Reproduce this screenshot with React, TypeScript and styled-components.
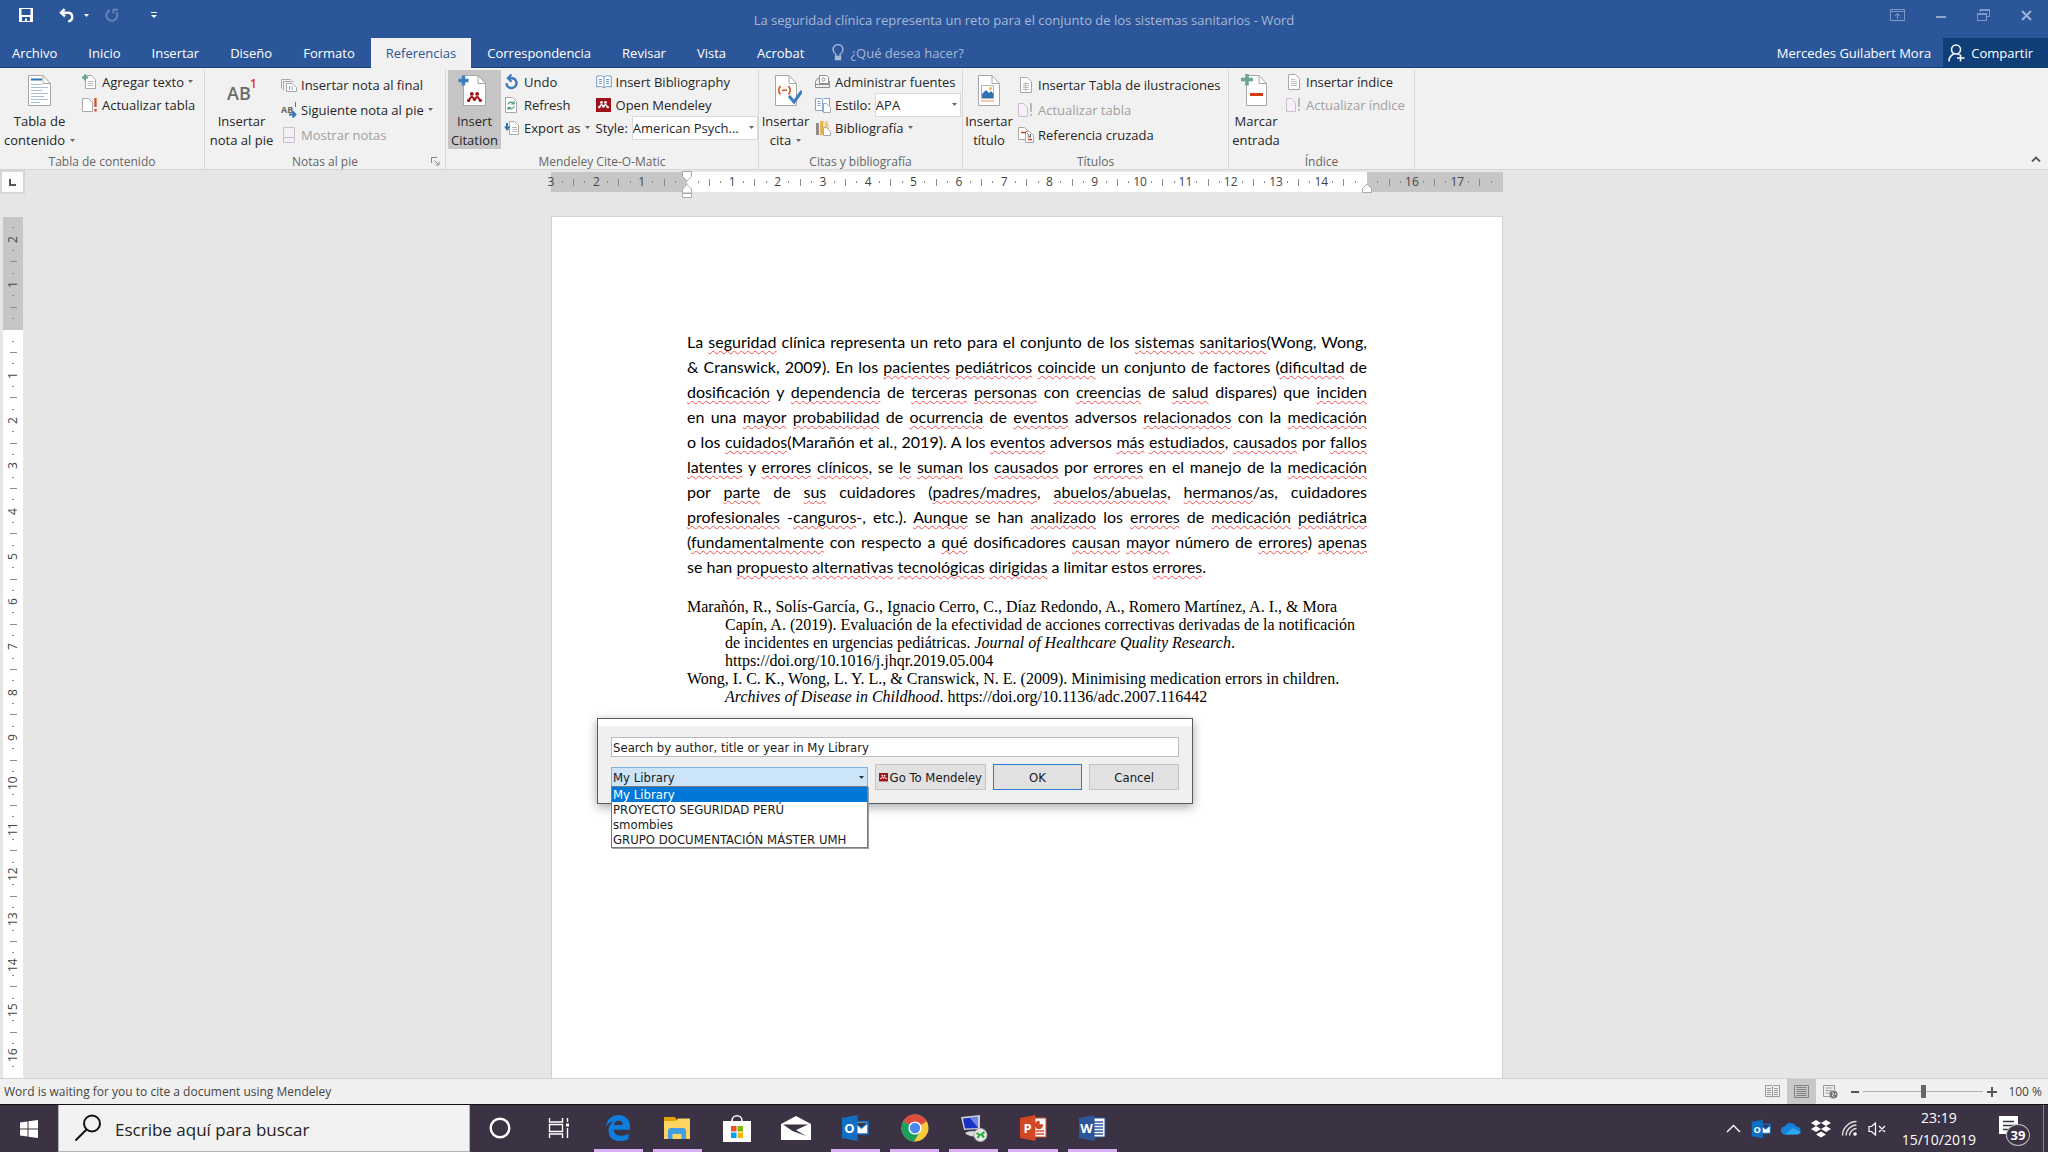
import React from "react";
import styled, { createGlobalStyle, css } from "styled-components";

const UI = `"Open Sans", "Noto Sans", sans-serif`;
const FORM = `"DejaVu Sans Condensed", "Open Sans", sans-serif`;
const BLUE = "#2b579a";

const GlobalStyle = createGlobalStyle`
  *, *::before, *::after { box-sizing: border-box; }
  body { margin: 0; font-family: ${UI}; font-size: 13px; color: #262626; }
  button, input, select { font: inherit; color: inherit; }
  button { border: 0; padding: 0; background: none; cursor: default; }
  svg { display: block; flex: none; }
  h1, h2, p, ul { margin: 0; padding: 0; font-weight: 400; }
`;

/* ---------- layout shells ---------- */

const Screen = styled.div`
  display: flex;
  flex-direction: column;
  min-height: 100vh;
  background: #e6e6e6;
`;

const TitleBar = styled.header`
  display: grid;
  grid-template-columns: 1fr auto 1fr;
  height: 38px;
  padding-bottom: 8px;
  align-items: center;
  background: ${BLUE};
`;

const QuickAccess = styled.div`
  display: flex;
  align-items: center;
  gap: 16px;
  padding-left: 19px;
`;

const IconButton = styled.button<{ $after?: number }>`
  display: flex;
  align-items: center;
  gap: 10px;
  padding-right: ${(p) => p.$after ?? 0}px;
`;

const DocTitle = styled.h1`
  padding-top: 10px;
  font-size: 13px;
  line-height: 20px;
  color: #a7b8d6;
`;

const WindowButtons = styled.div`
  display: flex;
  justify-content: flex-end;
  align-items: center;
  gap: 31px;
  padding-right: 16px;
`;

const TabBar = styled.nav`
  display: flex;
  gap: 1px;
  height: 30px;
  background: ${BLUE};
  border-bottom: 1px solid #124078;
`;

const Tab = styled.button<{ $active?: boolean }>`
  height: 30px;
  padding: 0 15px;
  line-height: 30px;
  color: ${(p) => (p.$active ? BLUE : "#fff")};
  background: ${(p) => (p.$active ? "#f1f1f1" : "transparent")};
  &:first-child { padding-left: 12px; }
`;

const TellMe = styled.button`
  display: flex;
  align-items: center;
  gap: 6px;
  margin-left: 12px;
  color: #a7b8d6;
`;

const Account = styled.span`
  margin-left: auto;
  padding-right: 11px;
  line-height: 30px;
  color: #fff;
`;

const ShareButton = styled.button`
  display: flex;
  align-items: center;
  gap: 6px;
  padding: 0 15px 0 5px;
  color: #fff;
  background: #103f78;
`;

const Ribbon = styled.section`
  display: flex;
  height: 102px;
  padding-top: 2px;
  background: #f1f1f1;
  border-bottom: 1px solid #d5d5d5;
`;

const Group = styled.div<{ $w: number }>`
  display: flex;
  flex-direction: column;
  flex: none;
  width: ${(p) => p.$w}px;
  border-right: 1px solid #d9d9d9;
`;

const GroupBody = styled.div`
  display: flex;
  flex: none;
  height: 80px;
`;

const GroupLabel = styled.div`
  display: grid;
  grid-template-columns: 14px 1fr 14px;
  align-items: center;
  flex: 1;
  padding-top: 4px;
  text-align: center;
  font-size: 12px;
  line-height: 14px;
  color: #666;
`;

const BigButton = styled.button<{ $w: number; $on?: boolean }>`
  display: flex;
  flex-direction: column;
  align-items: center;
  flex: none;
  width: ${(p) => p.$w}px;
  height: 79px;
  padding-top: 4px;
  margin-left: ${(p) => (p.$on ? 2 : 0)}px;
  line-height: 19px;
  white-space: nowrap;
  background: ${(p) => (p.$on ? "#c5c5c5" : "transparent")};
  svg { margin-bottom: 5px; }
`;

const Line = styled.span`
  display: flex;
  align-items: center;
  gap: 5px;
  svg { margin: 0; }
`;

const Stack = styled.div<{ $row: number; $top?: number }>`
  display: grid;
  grid-auto-rows: ${(p) => p.$row}px;
  align-content: start;
  padding: ${(p) => p.$top ?? 0}px 0 0 3px;
  & + & { padding-left: 6px; }
`;

const Small = styled.button<{ $off?: boolean }>`
  display: flex;
  align-items: center;
  gap: 4px;
  white-space: nowrap;
  color: ${(p) => (p.$off ? "#a0a0a0" : "inherit")};
`;

const StyleField = styled.label`
  display: flex;
  align-items: center;
  gap: 4px;
  white-space: nowrap;
`;

const SelectBox = styled.span<{ $w: number }>`
  display: flex;
  align-items: center;
  width: ${(p) => p.$w}px;
  height: 24px;
  padding-right: 3px;
  background: #fff;
  border: 1px solid #d9d9d9;
  select {
    flex: 1;
    min-width: 0;
    appearance: none;
    border: 0;
    padding: 0;
    outline: 0;
    background: transparent;
  }
`;

const CollapseButton = styled.button`
  margin: auto 7px 7px auto;
`;

/* ---------- rulers and page ---------- */

const RulerRow = styled.div`
  display: grid;
  grid-template-columns: 27px 1fr 21px;
  height: 24px;
`;

const Corner = styled.button`
  display: grid;
  place-items: center;
  width: 25px;
  height: 24px;
  background: #fdfdfd;
  border: 2px solid #d6d6d6;
`;

const HRuler = styled.div`
  position: relative;
  display: flex;
  justify-content: space-between;
  align-items: center;
  justify-self: center;
  width: 952px;
  height: 20px;
  margin-top: 2px;
  background: linear-gradient(to right, #c6c6c6 14.28%, #fff 14.28%, #fff 85.71%, #c6c6c6 85.71%);
`;

const VRuler = styled.div`
  display: flex;
  flex-direction: column;
  justify-content: space-between;
  align-items: center;
  width: 20px;
  margin-left: 3px;
  background: linear-gradient(to bottom, #c6c6c6 13.16%, #fff 13.16%);
`;

const Mark = styled.span<{ $v?: boolean }>`
  display: flex;
  justify-content: center;
  align-items: center;
  font-size: 12px;
  line-height: 14px;
  color: #444;
  ${(p) => (p.$v ? css`height: 0; writing-mode: vertical-rl; transform: rotate(180deg);` : css`width: 0;`)}
`;

const Tick = styled.i<{ $v?: boolean; $len: number }>`
  flex: none;
  width: ${(p) => (p.$v ? p.$len : 1)}px;
  height: ${(p) => (p.$v ? 1 : p.$len)}px;
  background: #8c8c8c;
`;

const IndentMarker = styled.span<{ $at: string; $top: number }>`
  position: absolute;
  left: ${(p) => p.$at};
  top: ${(p) => p.$top}px;
  margin-left: -6px;
`;

const Desk = styled.main`
  display: grid;
  grid-template-columns: 27px 1fr 21px;
  flex: 1;
  padding-top: 23px;
`;

const Page = styled.article`
  position: relative;
  justify-self: center;
  width: 950px;
  padding: 112px 135px 0;
  background: #fff;
  box-shadow: 0 0 0 1px #d2d2d2;
`;

const Body = styled.p`
  font-family: Lato, sans-serif;
  font-size: 16px;
  line-height: 25px;
  color: #000;
`;

const BodyLine = styled.span<{ $last?: boolean }>`
  display: block;
  white-space: nowrap;
  text-align: justify;
  text-align-last: ${(p) => (p.$last ? "left" : "justify")};
`;

const Misspelt = styled.span`
  text-decoration: underline wavy #f05050;
  text-decoration-thickness: 1px;
  text-underline-offset: 2px;
  text-decoration-skip-ink: none;
`;

const References = styled.div`
  margin-top: 19px;
  font-family: "Liberation Serif", serif;
  font-size: 16px;
  line-height: 18px;
  color: #000;
`;

const RefLine = styled.span<{ $hang?: boolean }>`
  display: block;
  white-space: nowrap;
  padding-left: ${(p) => (p.$hang ? 38 : 0)}px;
`;

/* ---------- citation dialog ---------- */

const Dialog = styled.form`
  position: absolute;
  left: 45px;
  top: 501px;
  width: 596px;
  padding: 18px 13px 13px;
  font-family: ${FORM};
  font-size: 13px;
  color: #1a1a1a;
  background: linear-gradient(#fff 7px, #f0f0f0 7px);
  border: 1px solid #5a5a5a;
  box-shadow: 0 3px 10px rgba(0, 0, 0, 0.35);
`;

const SearchInput = styled.input`
  display: block;
  width: 100%;
  height: 20px;
  padding: 0 1px;
  border: 1px solid #bcbcbc;
  border-radius: 0;
  outline: 0;
  background: #fff;
`;

const DialogRow = styled.div`
  display: flex;
  align-items: center;
  gap: 7px;
  margin-top: 7px;
`;

const Library = styled.div`
  position: relative;
  width: 257px;
`;

const LibrarySelect = styled.span`
  display: flex;
  align-items: center;
  height: 20px;
  padding-right: 3px;
  background: #cce4f7;
  border: 1px solid #7fb0de;
  select {
    flex: 1;
    appearance: none;
    border: 0;
    padding: 0 1px;
    outline: 0;
    background: transparent;
  }
`;

const Options = styled.ul`
  position: absolute;
  left: 0;
  right: 0;
  top: 19px;
  list-style: none;
  background: #fff;
  border: 1px solid #7a7a7a;
  box-shadow: 1px 1px 0 #a0a0a0;
`;

const Option = styled.li<{ $on?: boolean }>`
  height: 15px;
  padding-left: 1px;
  line-height: 15px;
  white-space: nowrap;
  color: ${(p) => (p.$on ? "#fff" : "inherit")};
  background: ${(p) => (p.$on ? "#0078d7" : "transparent")};
`;

const DialogButton = styled.button<{ $w: number; $primary?: boolean }>`
  display: flex;
  align-items: center;
  justify-content: center;
  gap: 2px;
  flex: 1 1 ${(p) => p.$w}px;
  height: 26px;
  white-space: nowrap;
  background: #e1e1e1;
  border: 1px solid ${(p) => (p.$primary ? "#2a7bd4" : "#c4c4c4")};
`;

/* ---------- status bar ---------- */

const StatusBar = styled.footer`
  display: flex;
  align-items: center;
  height: 26px;
  padding: 0 6px 0 4px;
  font-size: 12px;
  color: #444;
  background: #f0f0f0;
  border-top: 1px solid #d2d2d2;
`;

const ViewButton = styled.button<{ $on?: boolean }>`
  display: grid;
  place-items: center;
  width: 29px;
  height: 25px;
  background: ${(p) => (p.$on ? "#c8c8c8" : "transparent")};
`;

const Views = styled.div`
  display: flex;
  margin: 0 6px 0 auto;
`;

const Zoom = styled.input`
  appearance: none;
  width: 120px;
  height: 14px;
  margin: 0 4px;
  background: linear-gradient(#b0b0b0, #b0b0b0) center / 100% 1px no-repeat;
  &::-webkit-slider-thumb { appearance: none; width: 5px; height: 13px; background: #666; }
`;

const ZoomValue = styled.span`
  width: 45px;
  text-align: right;
`;

/* ---------- taskbar ---------- */

const Taskbar = styled.footer`
  display: flex;
  height: 48px;
  color: #fff;
  background: #3b3244;
  border-top: 1px solid #111;
`;

const Start = styled.button`
  display: grid;
  place-items: center;
  width: 58px;
`;

const TaskSearch = styled.label`
  display: flex;
  align-items: center;
  gap: 13px;
  width: 412px;
  padding-left: 15px;
  color: #111;
  background: #f1f1f1;
  border: 1px solid #b5b5b5;
  border-top: 0;
  input {
    flex: 1;
    min-width: 0;
    border: 0;
    padding: 2px 0 0;
    outline: 0;
    background: transparent;
    font-size: 17px;
    &::placeholder { color: #222; opacity: 1; }
  }
`;

const Apps = styled.div`
  display: grid;
  grid-template-columns: repeat(11, 1fr);
  width: 652px;
`;

const AppButton = styled.button<{ $open?: boolean }>`
  display: grid;
  place-items: center;
  margin: 0 5px;
  padding-bottom: 1px;
  border-top: 3px solid transparent;
  border-bottom: 3px solid ${(p) => (p.$open ? "#d9aef5" : "transparent")};
`;

const Tray = styled.div`
  display: flex;
  align-items: center;
  gap: 10px;
  margin-left: auto;
`;

const Clock = styled.time`
  margin-left: 6px;
  text-align: center;
  font-size: 14px;
  line-height: 22px;
`;

const Notices = styled.button`
  position: relative;
  margin: 0 4px 0 13px;
`;

const NoticeCount = styled.span`
  position: absolute;
  left: 7px;
  top: 9px;
  display: grid;
  place-items: center;
  width: 24px;
  height: 22px;
  border: 1px solid #bbb;
  border-radius: 50%;
  font-size: 13px;
  font-weight: 700;
  background: #3b3244;
`;

const ShowDesktop = styled.button`
  width: 5px;
  height: 47px;
  border-left: 1px solid #857e8c;
`;

/* ---------- icons ---------- */

const Caret = ({ color = "#666" }: { color?: string }) => (
  <svg width="5" height="3" viewBox="0 0 5 3"><path d="M0 0h5L2.500 3z" fill={color} /></svg>
);

const SaveIcon = () => (
  <svg width="14" height="14" viewBox="0 0 14 14">
    <path d="M0 0h14v14H0z" fill="#fff" />
    <path d="M2.5 1h9v6h-9z" fill={BLUE} /><path d="M3 9h8v4H3z" fill={BLUE} /><path d="M6 10.5h2V13H6z" fill="#fff" />
  </svg>
);

const UndoIcon = () => (
  <svg width="15" height="15" viewBox="0 0 15 15" fill="none" stroke="#fff" strokeWidth="2.4">
    <path d="M5.6 1L2 4.8l4 3.6M2.4 4.8h6.4c5.6 0 6 7.600.4 8.600" />
  </svg>
);

const RedoIcon = () => (
  <svg width="14" height="14" viewBox="0 0 14 14" fill="none" stroke="#6484b8" strokeWidth="2">
    <path d="M5 2.300a5.400 5.400 0 1 0 6.200 2" /><path d="M8.400 1v4.400M8.400 1.800H13" />
  </svg>
);

const Sheet = ({ w = 24, h = 31, children }: { w?: number; h?: number; children?: React.ReactNode }) => (
  <svg width={w + 10} height={h + 2} viewBox={`-5 -1 ${w + 10} ${h + 2}`}>
    <path d={`M.5.5H${w - 8}l7.5 8V${h - 0.5}H.5z`} fill="#fff" stroke="#a6a6a6" />
    <path d={`M${w - 8} .5v8h7.5`} fill="none" stroke="#a6a6a6" />
    {children}
  </svg>
);

const TocIcon = () => (
  <Sheet w={23}>
    <path d="M3 4.500h11" stroke="#2e74b5" strokeWidth="2" />
    <path d="M3 9.500h11M3 12.500h17M3 15.500h11M3 18.500h17M3 21.500h13M3 24.500h17M3 27.500h9" stroke="#a9bcd8" />
  </Sheet>
);

const FootnoteIcon = () => (
  <svg width="33" height="33" viewBox="0 0 33 33" fontFamily="Open Sans, sans-serif">
    <text x="2" y="26" fontSize="18" fontWeight="600" fill="#6a6a6a">AB</text>
    <text x="25" y="14" fontSize="12" fontWeight="600" fill="#d83b01">1</text>
  </svg>
);

const Readers = ({ color }: { color: string }) => (
  <g>
    <circle cx="4.800" cy="1.900" r="1.900" fill={color} /><circle cx="10.200" cy="1.900" r="1.900" fill={color} />
    <circle cx="1.600" cy="8.400" r="1.600" fill={color} /><circle cx="7.500" cy="7.400" r="1.600" fill={color} /><circle cx="13.400" cy="8.400" r="1.600" fill={color} />
    <path d="M1.600 8.400c1.800-.6 1-3.400 3.200-3.400s1.200 2.400 2.700 2.400S8.200 5 10.200 5s1.400 2.800 3.200 3.400" fill="none" stroke={color} strokeWidth="2" />
  </g>
);

const CitationIcon = () => (
  <Sheet w={23} h={31}>
    <path d="M-4.500 5.500h10M.500 .500v10" stroke="#3c7ebf" strokeWidth="3.4" />
    <g transform="translate(4 17)"><Readers color="#a01018" /></g>
  </Sheet>
);

const InsertCiteIcon = () => (
  <Sheet w={22} h={31}>
    <path d="M5.500 11c-2 2.500-2 6 0 8.500M13.500 11c2 2.500 2 6 0 8.500M7 15.200h5" fill="none" stroke="#d9531e" strokeWidth="1.600" />
    <path d="M14 21l5 6 8-11" fill="none" stroke="#3c7ebf" strokeWidth="3" />
  </Sheet>
);

const FigureIcon = () => (
  <Sheet w={22} h={31}>
    <path d="M3.500 10.500h12v13h-12z" fill="#fff" stroke="#b3b3b3" />
    <path d="M4 23v-4l4-4 3 3 2-2 2.500 3v4z" fill="#2e74b5" /><circle cx="12.500" cy="13.500" r="1.400" fill="#f0b040" />
    <path d="M3 26h13" stroke="#f3c9bd" strokeWidth="2" />
  </Sheet>
);

const MarkEntryIcon = () => (
  <Sheet w={21} h={31}>
    <path d="M-5 4.500H7M1 -1.500v12" stroke="#6aa592" strokeWidth="3.600" />
    <path d="M4 19.500h13" stroke="#d13f10" strokeWidth="3" />
  </Sheet>
);

type MiniKind =
  | "undo" | "add" | "update" | "updateOff" | "endnote" | "next" | "show" | "refresh" | "export" | "book" | "men"
  | "sources" | "style" | "biblio" | "table" | "cross" | "index";

const page = (x: number, y: number, w: number, h: number, fill = "#fff", stroke = "#a8a8a8") => (
  <path d={`M${x} ${y}h${w - 4}l4 4v${h - 4}h-${w}z`} fill={fill} stroke={stroke} />
);

const minis: Record<MiniKind, React.ReactNode> = {
  undo: <g fill="none" stroke="#3c78b8"><path d="M4.500 4.200h4a5 5 0 1 1-6 5" strokeWidth="2.400" /><path d="M7.500 .500L3.800 4.200l3.700 3.600" strokeWidth="2" /></g>,
  add: <>{page(3.5, 1.5, 10, 13)}<path d="M5.500 7.500h6M5.500 9.500h6M5.500 11.500h6" stroke="#bbb" /><path d="M0 3.500h6M3 .500v6" stroke="#5fa088" strokeWidth="2" /></>,
  update: <>{page(0.5, 1.5, 10, 13)}<path d="M13.500 1v9M13.500 12v2.500" stroke="#d9481c" strokeWidth="2.200" /></>,
  updateOff: <>{page(0.5, 1.5, 9, 13, "#f6eff7", "#cbbfce")}<path d="M13 1v9M13 12v2" stroke="#a8a8a8" strokeWidth="1.500" /></>,
  endnote: <><path d="M.5 11.500v-9h9" fill="none" stroke="#a8a8a8" /><path d="M2.500 13.500v-9h10" fill="none" stroke="#a8a8a8" />{page(5.5, 6.5, 10, 8)}<path d="M8.500 9v4M11 9v4" stroke="#8ba7d0" /></>,
  next: <><text x="0" y="11" fontSize="9" fontWeight="700" fill="#666" fontFamily="Open Sans, sans-serif">AB</text><path d="M14.500 0v5" stroke="#d9481c" /><path d="M8 12.500h6M11.500 9.500l3 3-3 3" fill="none" stroke="#2e74b5" strokeWidth="1.800" /></>,
  show: <><path d="M2.500 .500h11v15h-11z" fill="#f4eef6" stroke="#cbbfce" /><path d="M3 10.500h10" stroke="#cbbfce" /></>,
  refresh: <>{page(1.5, 0.5, 11, 15)}<path d="M4 7.500a3 3 0 0 1 5.500-1M10 9a3 3 0 0 1-5.500 1.500M10 4v3H7M4 13v-2.500h3" fill="none" stroke="#4c9a7c" strokeWidth="1.200" /></>,
  export: <>{page(5.5, 1.5, 9, 13)}<path d="M8 7.500h5M8 9.500h5M8 11.500h5" stroke="#bbb" /><path d="M3 3v4" stroke="#2e74b5" strokeWidth="2" /><path d="M0 6.500h6.500L3.200 11z" fill="#2e74b5" /></>,
  book: <path d="M.7 2.500c3-1.200 5.300-1 7.300.5 2-1.500 4.300-1.700 7.300-.5v10.500c-3-.8-5.300-.6-7.300.8-2-1.400-4.300-1.600-7.300-.8zM8 3v10.500M3 5.500h3M3 7.500h3M3 9.500h3M10 5.500h3M10 7.500h3M10 9.500h3" fill="#fff" stroke="#6f9bcb" />,
  men: <><path d="M0 1h15v14H0z" fill="#a01018" /><g transform="translate(2 4) scale(.73)"><Readers color="#fff" /></g></>,
  sources: <><path d="M.5 7.500l2-3h9l3 3v6H.5zM.5 10.500h14" fill="#eee" stroke="#8f8f8f" /><path d="M4.500 1.500h7l2 2v6h-9z" fill="#fff" stroke="#8f8f8f" /><circle cx="8.500" cy="5.500" r="1.500" fill="none" stroke="#8f8f8f" /></>,
  style: <><path d="M.5 1.500h6l1 1 1-1h6v12h-6l-1 1-1-1h-6zM7.500 2v12M2.500 4.500h3M2.500 6.500h3M2.500 8.500h3" fill="#fff" stroke="#7ea4d0" />{page(8.500, 6.5, 7, 9)}</>,
  biblio: <><path d="M1 3h3v12H1z" fill="#8c8c8c" /><path d="M5 1h3.500v14H5z" fill="#e6b450" /><path d="M9.500 2l3-1 1.500 8h-4z" fill="#f0c878" />{page(8.500, 7.500, 7, 8)}</>,
  table: <>{page(2.5, 0.5, 11, 15)}<path d="M5 6.500h6M5 8.500h6M5 10.500h6M5 12.500h6M7.500 5v9" stroke="#bdbdbd" /></>,
  cross: <>{page(0.5, 0.5, 10, 12)}{page(7.500, 4.500, 8, 11)}<path d="M3 5.500h5M10 12.500h4" stroke="#d13f10" strokeWidth="1.600" /><path d="M9 6l3 4M12.500 7v3h-3" fill="none" stroke="#666" /></>,
  index: <>{page(2.5, 0.5, 11, 15)}<path d="M5 5.500h4M5 7.500h6M5 9.500h6M5 11.500h6" stroke="#bdbdbd" /></>,
};

const Mini = ({ kind }: { kind: MiniKind }) => (
  <svg width="16" height="16" viewBox="0 0 16 16">{minis[kind]}</svg>
);

const SmallButton = ({ icon, children, off, menu }: { icon: MiniKind; children: string; off?: boolean; menu?: boolean }) => (
  <Small type="button" $off={off}>
    <Mini kind={icon} />
    {children}
    {menu && <Caret />}
  </Small>
);

const OfficeIcon = ({ letter, color, size = 28 }: { letter: string; color: string; size?: number }) => (
  <svg width={size} height={size} viewBox="0 0 28 28">
    {letter === "O" && <path d="M13 7.500h14v12.500H13zM14 8.500l6.500 5.500L27 8.500" fill="#fff" stroke={color} strokeWidth="1.500" />}
    {letter !== "O" && <path d="M13 4h14v19H13z" fill="#fff" stroke={color} />}
    {letter === "W" && <path d="M16 8h9M16 11h9M16 14h9M16 17h9M16 20h9" stroke={color} strokeWidth="1.500" />}
    {letter === "P" && <path d="M20 7.500a3.500 3.500 0 1 0 3.500 3.500H20zM17 17h8M17 20h8" fill={color} stroke={color} strokeWidth="1.300" />}
    <path d="M1 4L16.500 1v26L1 24z" fill={color} />
    <text x="8.500" y="19" textAnchor="middle" fontSize="13" fontWeight="700" fill="#fff" fontFamily="Open Sans, sans-serif">{letter}</text>
  </svg>
);

const EdgeIcon = () => (
  <svg width="26" height="28" viewBox="0 0 26 28">
    <path d="M1 12.500C2 5 7 1 13.500 1 20.500 1 25 6 25 12.500v3.200H8.700c.2 4 3.600 6 7.500 6 2.800 0 5.200-.7 7.300-1.900v5.400c-2.500 1.300-5.500 1.900-8.700 1.900C8 27.100 3.500 22.900 3.500 16.500c0-4.200 2.300-7.400 6-9.200C5.700 7.500 3 9.500 1 12.500zm7.900-1.400h8.900c0-2.700-1.500-4.400-4.300-4.400-2.600 0-4.200 1.700-4.600 4.400z" fill="#0f7ddb" fillRule="evenodd" />
  </svg>
);

const FolderIcon = () => (
  <svg width="26" height="24" viewBox="0 0 26 24">
    <path d="M0 1h11l2 3h12.500v19H0z" fill="#e8a000" /><path d="M0 5h12l2-2.500h12V23H0z" fill="#fcd462" />
    <path d="M4 23v-7.500c0-2.500 1-3.500 3.500-3.500h11c2.500 0 3.500 1 3.500 3.500V23h-4.500v-5h-9v5z" fill="#3f9fe0" />
  </svg>
);

const StoreIcon = () => (
  <svg width="28" height="28" viewBox="0 0 28 28">
    <path d="M9 7c0-7 10-7 10 0" fill="none" stroke="#fff" strokeWidth="1.600" /><path d="M0 7h28v21H0z" fill="#fff" />
    <path d="M8 12h5.500v5.500H8z" fill="#f25022" /><path d="M14.500 12H20v5.500h-5.500z" fill="#7fba00" />
    <path d="M8 18.500h5.500V24H8z" fill="#00a4ef" /><path d="M14.500 18.500H20V24h-5.500z" fill="#ffb900" />
  </svg>
);

const MailIcon = () => (
  <svg width="30" height="24" viewBox="0 0 30 24">
    <path d="M0 8L15 0l15 8v16H0z" fill="#fff" /><path d="M2 8.500h25l-12 5.500 10 6-13.500-5z" fill="#3b3244" />
  </svg>
);

const ChromeIcon = () => (
  <svg width="28" height="28" viewBox="0 0 28 28">
    <circle cx="14" cy="14" r="13.500" fill="#fbc93d" />
    <path d="M14 14L2.300 7.300A13.500 13.500 0 0 1 25.700 7.300z" fill="#dd4b3e" /><path d="M14 7.300h11.700L14 14z" fill="#dd4b3e" />
    <path d="M2.300 7.300A13.500 13.500 0 0 0 13 27.500l6-10L14 14z" fill="#1a9f5c" />
    <circle cx="14" cy="14" r="6.600" fill="#fff" /><circle cx="14" cy="14" r="5.200" fill="#4a87ee" />
  </svg>
);

const RemoteIcon = () => (
  <svg width="28" height="28" viewBox="0 0 28 28">
    <path d="M1 3l19-2v14L4 16z" fill="#c9ccd8" /><path d="M3 4.500l15-1.500v11L5 14.500z" fill="#1733c4" /><path d="M10 4l8-1v11z" fill="#6d86ee" />
    <path d="M5 19c2-2 11-3 15-1l-2 4c-5 1-10 0-13-3z" fill="#d8d8dc" />
    <circle cx="20.500" cy="21" r="6.500" fill="#e9e9e9" stroke="#aaa" /><path d="M16.500 19l3 2-2 3M24.500 18l-3 2.500 2.500 3" fill="none" stroke="#1fae2d" strokeWidth="2" />
  </svg>
);

const CortanaIcon = () => (
  <svg width="22" height="22" viewBox="0 0 22 22"><circle cx="11" cy="11" r="9.300" fill="none" stroke="#fff" strokeWidth="2.400" /></svg>
);

const TaskViewIcon = () => (
  <svg width="22" height="22" viewBox="0 0 22 22" fill="none" stroke="#fff" strokeWidth="1.400">
    <path d="M1.500 1v4h13V1M1.500 21v-4h13v4M1.500 7.500h13v7h-13zM19.500 1v4M19.500 11v10" /><path d="M18 6.500h3v3h-3z" fill="#fff" stroke="none" />
  </svg>
);

const DropboxIcon = () => (
  <svg width="20" height="18" viewBox="0 0 20 18" fill="#fff">
    <path d="M5 0l5 3-5 3-5-3zM15 0l5 3-5 3-5-3zM5 6l5 3-5 3-5-3zM15 6l5 3-5 3-5-3zM10 11.500l5 3-5 3-5-3z" />
  </svg>
);

/* ---------- composed parts ---------- */

const HorizontalRuler = () => (
  <HRuler>
    {Array.from({ length: 85 }, (_, i) => {
      const cm = i / 4 - 3;
      if (cm === 0 || cm === 15 || cm === 18) return <Mark key={i} />;
      return <Mark key={i}>{Number.isInteger(cm) ? Math.abs(cm) : <Tick $len={i % 2 ? 2 : 7} />}</Mark>;
    })}
    <IndentMarker $at="14.28%" $top={-1}>
      <svg width="12" height="27" viewBox="0 0 12 27" fill="#fff" stroke="#a8a8a8">
        <path d="M1.500 .500h9v5l-4.500 4.500-4.500-4.500z" /><path d="M6 13.500l4.500 4.500v4h-9v-4zM1.500 22.500h9v4h-9z" />
      </svg>
    </IndentMarker>
    <IndentMarker $at="85.71%" $top={11}>
      <svg width="12" height="11" viewBox="0 0 12 11"><path d="M6 1l4.500 4.500v4h-9v-4z" fill="#fff" stroke="#a8a8a8" /></svg>
    </IndentMarker>
  </HRuler>
);

const VerticalRuler = () => (
  <VRuler>
    {Array.from({ length: 77 }, (_, i) => {
      const cm = i / 4 - 2.5;
      if (i === 0 || i === 76 || cm === 0) return <Mark key={i} $v />;
      return <Mark key={i} $v>{Number.isInteger(cm) ? Math.abs(cm) : <Tick $v $len={i % 2 ? 2 : 7} />}</Mark>;
    })}
  </VRuler>
);

const BODY = [
  "La {seguridad} clínica representa un reto para el conjunto de los {sistemas} {sanitarios}(Wong, Wong,",
  "& Cranswick, 2009). En los {pacientes} {pediátricos} {coincide} un conjunto de factores ({dificultad} de",
  "{dosificación} y {dependencia} de {terceras} {personas} con {creencias} de {salud} dispares) que {inciden}",
  "en una {mayor} {probabilidad} de {ocurrencia} de {eventos} adversos {relacionados} con la {medicación}",
  "o los {cuidados}(Marañón et al., 2019). A los {eventos} adversos {más} {estudiados}, {causados} por {fallos}",
  "{latentes} y {errores} {clínicos}, se {le} {suman} los {causados} por {errores} en el manejo de la {medicación}",
  "por {parte} de {sus} cuidadores ({padres/madres}, {abuelos/abuelas}, {hermanos}/as, cuidadores",
  "{profesionales} -{canguros}-, etc.). {Aunque} se han {analizado} los {errores} de {medicación} {pediátrica}",
  "({fundamentalmente} con respecto a {qué} dosificadores {causan} {mayor} número de {errores}) {apenas}",
  "se han {propuesto} {alternativas} {tecnológicas} {dirigidas} a limitar estos {errores}.",
];

const spellChecked = (line: string) =>
  line.split(/[{}]/).map((part, i) => (i % 2 ? <Misspelt key={i}>{part}</Misspelt> : part));

const TABS = ["Archivo", "Inicio", "Insertar", "Diseño", "Formato", "Referencias", "Correspondencia", "Revisar", "Vista", "Acrobat"];
const LIBRARIES = ["My Library", "PROYECTO SEGURIDAD PERÚ", "smombies", "GRUPO DOCUMENTACIÓN MÁSTER UMH"];

const RibbonGroup = ({ w, label, launcher, children }: { w: number; label: string; launcher?: boolean; children: React.ReactNode }) => (
  <Group $w={w}>
    <GroupBody>{children}</GroupBody>
    <GroupLabel>
      <span />
      {label}
      {launcher && (
        <svg width="9" height="9" viewBox="0 0 9 9" fill="none" stroke="#888"><path d="M.5 6V.5H6M3.500 3.500l4 4M8 4.500V8H4.500" /></svg>
      )}
    </GroupLabel>
  </Group>
);

export default function App() {
  return (
    <Screen>
      <GlobalStyle />
      <TitleBar>
        <QuickAccess>
          <IconButton $after={10} aria-label="Guardar"><SaveIcon /></IconButton>
          <IconButton aria-label="Deshacer"><UndoIcon /><Caret color="#fff" /></IconButton>
          <IconButton $after={12} aria-label="Rehacer"><RedoIcon /></IconButton>
          <IconButton aria-label="Personalizar">
            <svg width="14" height="7" viewBox="0 0 14 7"><path d="M4 .5h6" stroke="#fff" /><path d="M4 3h6L7 6z" fill="#fff" /></svg>
          </IconButton>
        </QuickAccess>
        <DocTitle>La seguridad clínica representa un reto para el conjunto de los sistemas sanitarios - Word</DocTitle>
        <WindowButtons>
          <IconButton aria-label="Opciones de cinta">
            <svg width="15" height="12" viewBox="0 0 15 12" fill="none" stroke="#7f9ac6"><path d="M.5.5h14v11H.5zM.5 2.500h14M7.500 10V5M5 7l2.500-2.500L10 7" /></svg>
          </IconButton>
          <IconButton aria-label="Minimizar">
            <svg width="10" height="12" viewBox="0 0 10 12"><path d="M0 8h10" stroke="#8ea6cd" strokeWidth="2" /></svg>
          </IconButton>
          <IconButton aria-label="Restaurar">
            <svg width="13" height="12" viewBox="0 0 13 12" fill="none" stroke="#7f9ac6"><path d="M.5 4.500h9v7h-9zM.5 5.500h9M3 3V.500h9.500v7H10M3 1.500h9" /></svg>
          </IconButton>
          <IconButton aria-label="Cerrar">
            <svg width="11" height="11" viewBox="0 0 11 11"><path d="M1 1l9 9M10 1l-9 9" stroke="#9db1d3" strokeWidth="2" /></svg>
          </IconButton>
        </WindowButtons>
      </TitleBar>

      <TabBar>
        {TABS.map((t) => <Tab key={t} $active={t === "Referencias"}>{t}</Tab>)}
        <TellMe>
          <svg width="12" height="17" viewBox="0 0 12 17" fill="none" stroke="#a7b8d6" strokeWidth="1.400">
            <path d="M4 12V10.500C2 9 1 7.800 1 5.600a5 5 0 0 1 10 0c0 2.200-1 3.400-3 4.900V12M3.500 12.500h5v3h-5zM3.500 14h5" />
          </svg>
          ¿Qué desea hacer?
        </TellMe>
        <Account>Mercedes Guilabert Mora</Account>
        <ShareButton>
          <svg width="17" height="18" viewBox="0 0 17 18" fill="none" stroke="#fff" strokeWidth="1.500">
            <circle cx="8" cy="5.500" r="4.500" /><path d="M1 17.500c0-4 1.500-6 4.500-7.500M10 10l1.500 1M12.500 10.500v7M9 14h7.500" />
          </svg>
          Compartir
        </ShareButton>
      </TabBar>

      <Ribbon>
        <RibbonGroup w={205} label="Tabla de contenido">
          <BigButton $w={79}><TocIcon />Tabla de<Line>contenido <Caret /></Line></BigButton>
          <Stack $row={23}>
            <SmallButton icon="add" menu>Agregar texto</SmallButton>
            <SmallButton icon="update">Actualizar tabla</SmallButton>
          </Stack>
        </RibbonGroup>
        <RibbonGroup w={241} label="Notas al pie" launcher>
          <BigButton $w={73}><FootnoteIcon />Insertar<Line>nota al pie</Line></BigButton>
          <Stack $row={25} $top={2}>
            <SmallButton icon="endnote">Insertar nota al final</SmallButton>
            <SmallButton icon="next" menu>Siguiente nota al pie</SmallButton>
            <SmallButton icon="show" off>Mostrar notas</SmallButton>
          </Stack>
        </RibbonGroup>
        <RibbonGroup w={313} label="Mendeley Cite-O-Matic">
          <BigButton $w={53} $on><CitationIcon />Insert<Line>Citation</Line></BigButton>
          <Stack $row={23}>
            <SmallButton icon="undo">Undo</SmallButton>
            <SmallButton icon="refresh">Refresh</SmallButton>
            <SmallButton icon="export" menu>Export as</SmallButton>
          </Stack>
          <Stack $row={23}>
            <SmallButton icon="book">Insert Bibliography</SmallButton>
            <SmallButton icon="men">Open Mendeley</SmallButton>
            <StyleField>
              Style:
              <SelectBox $w={126}><select><option>American Psych...</option></select><Caret /></SelectBox>
            </StyleField>
          </Stack>
        </RibbonGroup>
        <RibbonGroup w={204} label="Citas y bibliografía">
          <BigButton $w={53}><InsertCiteIcon />Insertar<Line>cita <Caret /></Line></BigButton>
          <Stack $row={23}>
            <SmallButton icon="sources">Administrar fuentes</SmallButton>
            <StyleField>
              <Mini kind="style" />
              Estilo:
              <SelectBox $w={86}><select><option>APA</option></select><Caret /></SelectBox>
            </StyleField>
            <SmallButton icon="biblio" menu>Bibliografía</SmallButton>
          </Stack>
        </RibbonGroup>
        <RibbonGroup w={266} label="Títulos">
          <BigButton $w={52}><FigureIcon />Insertar<Line>título</Line></BigButton>
          <Stack $row={25} $top={2}>
            <SmallButton icon="table">Insertar Tabla de ilustraciones</SmallButton>
            <SmallButton icon="updateOff" off>Actualizar tabla</SmallButton>
            <SmallButton icon="cross">Referencia cruzada</SmallButton>
          </Stack>
        </RibbonGroup>
        <RibbonGroup w={186} label="Índice">
          <BigButton $w={54}><MarkEntryIcon />Marcar<Line>entrada</Line></BigButton>
          <Stack $row={23}>
            <SmallButton icon="index">Insertar índice</SmallButton>
            <SmallButton icon="updateOff" off>Actualizar índice</SmallButton>
          </Stack>
        </RibbonGroup>
        <CollapseButton aria-label="Contraer la cinta">
          <svg width="10" height="6" viewBox="0 0 10 6"><path d="M1 5.500l4-4 4 4" fill="none" stroke="#555" strokeWidth="1.800" /></svg>
        </CollapseButton>
      </Ribbon>

      <RulerRow>
        <Corner aria-label="Tabulación">
          <svg width="7" height="7" viewBox="0 0 7 7"><path d="M1 0v6h6" fill="none" stroke="#555" strokeWidth="2" /></svg>
        </Corner>
        <HorizontalRuler />
      </RulerRow>

      <Desk>
        <VerticalRuler />
        <Page>
          <Body lang="es">
            {BODY.map((line, i) => <BodyLine key={i} $last={i === BODY.length - 1}>{spellChecked(line)}</BodyLine>)}
          </Body>
          <References>
            <p>
              <RefLine>Marañón, R., Solís-García, G., Ignacio Cerro, C., Díaz Redondo, A., Romero Martínez, A. I., &amp; Mora</RefLine>
              <RefLine $hang>Capín, A. (2019). Evaluación de la efectividad de acciones correctivas derivadas de la notificación</RefLine>
              <RefLine $hang>de incidentes en urgencias pediátricas. <em>Journal of Healthcare Quality Research</em>.</RefLine>
              <RefLine $hang>https://doi.org/10.1016/j.jhqr.2019.05.004</RefLine>
            </p>
            <p>
              <RefLine>Wong, I. C. K., Wong, L. Y. L., &amp; Cranswick, N. E. (2009). Minimising medication errors in children.</RefLine>
              <RefLine $hang><em>Archives of Disease in Childhood</em>. https://doi.org/10.1136/adc.2007.116442</RefLine>
            </p>
          </References>

          <Dialog onSubmit={(e) => e.preventDefault()}>
            <SearchInput aria-label="Search" defaultValue="Search by author, title or year in My Library" />
            <DialogRow>
              <Library>
                <LibrarySelect>
                  <select aria-label="Library">{LIBRARIES.map((l) => <option key={l}>{l}</option>)}</select>
                  <Caret color="#333" />
                </LibrarySelect>
                <Options role="listbox" aria-label="Libraries">
                  {LIBRARIES.map((l, i) => <Option key={l} role="option" aria-selected={i === 0} $on={i === 0}>{l}</Option>)}
                </Options>
              </Library>
              <DialogButton type="button" $w={110}>
                <svg width="9" height="9" viewBox="0 0 15 15"><g transform="translate(0 -1)">{minis.men}</g></svg>
                Go To Mendeley
              </DialogButton>
              <DialogButton type="submit" $w={89} $primary>OK</DialogButton>
              <DialogButton type="button" $w={89}>Cancel</DialogButton>
            </DialogRow>
          </Dialog>
        </Page>
      </Desk>

      <StatusBar>
        Word is waiting for you to cite a document using Mendeley
        <Views>
          <ViewButton aria-label="Modo de lectura">
            <svg width="15" height="13" viewBox="0 0 15 13" fill="none" stroke="#999"><path d="M.5.5h6l1 1 1-1h6v11h-6l-1 1-1-1h-6zM7.500 1v11M2 3.500h4M2 5.500h4M2 7.500h4M2 9.500h4M9 3.500h4M9 5.500h4M9 7.500h4M9 9.500h4" /></svg>
          </ViewButton>
          <ViewButton $on aria-label="Diseño de impresión">
            <svg width="15" height="13" viewBox="0 0 15 13" fill="none" stroke="#808080"><path d="M.5.5h14v12H.5zM2.500 2.500h10M2.500 4.500h10M2.500 6.500h10M2.500 8.500h10M2.500 10.500h10" /></svg>
          </ViewButton>
          <ViewButton aria-label="Diseño web">
            <svg width="15" height="14" viewBox="0 0 15 14" fill="none" stroke="#999"><path d="M7 11.500H.5V.5h11V5M2.500 3h7M2.500 5.500h6M2.500 8h4" /><circle cx="10.500" cy="9.500" r="4" fill="#777" stroke="none" /><path d="M9 7l2 2-2 1 2 2M13 8l-1 2" stroke="#ddd" /></svg>
          </ViewButton>
        </Views>
        <IconButton aria-label="Alejar">
          <svg width="8" height="8" viewBox="0 0 8 8"><path d="M0 4h8" stroke="#555" strokeWidth="2" /></svg>
        </IconButton>
        <Zoom type="range" aria-label="Zoom" min={0} max={200} defaultValue={100} />
        <IconButton aria-label="Acercar">
          <svg width="10" height="10" viewBox="0 0 10 10"><path d="M0 5h10M5 0v10" stroke="#555" strokeWidth="2" /></svg>
        </IconButton>
        <ZoomValue>100 %</ZoomValue>
      </StatusBar>

      <Taskbar>
        <Start aria-label="Inicio">
          <svg width="18" height="18" viewBox="0 0 18 18" fill="#fff"><path d="M0 2.500L7.500 1.500V8.500H0zM8.500 1.300L18 0v8.500H8.500zM0 9.500h7.500v7L0 15.500zM8.500 9.500H18V18l-9.500-1.300z" /></svg>
        </Start>
        <TaskSearch>
          <svg width="28" height="28" viewBox="0 0 28 28" fill="none" stroke="#111" strokeWidth="2"><circle cx="18" cy="9.500" r="8" /><path d="M12.500 15.500L1.500 26.500" /></svg>
          <input aria-label="Buscar" placeholder="Escribe aquí para buscar" />
        </TaskSearch>
        <Apps>
          <AppButton aria-label="Cortana"><CortanaIcon /></AppButton>
          <AppButton aria-label="Vista de tareas"><TaskViewIcon /></AppButton>
          <AppButton $open aria-label="Edge"><EdgeIcon /></AppButton>
          <AppButton $open aria-label="Explorador"><FolderIcon /></AppButton>
          <AppButton aria-label="Store"><StoreIcon /></AppButton>
          <AppButton aria-label="Correo"><MailIcon /></AppButton>
          <AppButton $open aria-label="Outlook"><OfficeIcon letter="O" color="#0f6fc4" /></AppButton>
          <AppButton $open aria-label="Chrome"><ChromeIcon /></AppButton>
          <AppButton $open aria-label="Escritorio remoto"><RemoteIcon /></AppButton>
          <AppButton $open aria-label="PowerPoint"><OfficeIcon letter="P" color="#d24726" /></AppButton>
          <AppButton $open aria-label="Word"><OfficeIcon letter="W" color="#2b579a" /></AppButton>
        </Apps>
        <Tray>
          <svg width="15" height="9" viewBox="0 0 15 9"><path d="M1 8l6.500-6.500L14 8" fill="none" stroke="#fff" strokeWidth="1.400" /></svg>
          <OfficeIcon letter="O" color="#0f6fc4" size={20} />
          <svg width="20" height="13" viewBox="0 0 20 13"><path d="M4 12.500a4 4 0 0 1 0-8A6 6 0 0 1 15 4.500a4 4 0 0 1 1 8z" fill="#1583dc" /><path d="M4 12.500L12 6l7.500 4c0 1.500-1.500 2.500-3.500 2.500z" fill="#2fa8ee" /></svg>
          <DropboxIcon />
          <svg width="17" height="17" viewBox="0 0 17 17" fill="none" stroke="#ddd" strokeWidth="1.400"><path d="M1.500 15.500C1.500 8 8 1.500 15.500 1.500M5 15.500C5 10 10 5 15.500 5M8.500 15.500c0-3.500 3.500-7 7-7" /><circle cx="14" cy="14" r="1.800" fill="#fff" stroke="none" /></svg>
          <svg width="18" height="14" viewBox="0 0 18 14" fill="none" stroke="#fff" strokeWidth="1.200"><path d="M1 4.500h2.500L7.500 1v12L3.500 9.500H1zM11 4l6 6M17 4l-6 6" /></svg>
          <Clock>23:19<br />15/10/2019</Clock>
          <Notices aria-label="Notificaciones">
            <svg width="30" height="28" viewBox="0 0 30 28"><path d="M0 1h19v18h-8l-4 4v-4H0z" fill="#fff" /><path d="M4 6.500h11M4 10.500h11M4 14.500h8" stroke="#3b3244" strokeWidth="1.500" /></svg>
            <NoticeCount>39</NoticeCount>
          </Notices>
          <ShowDesktop aria-label="Mostrar escritorio" />
        </Tray>
      </Taskbar>
    </Screen>
  );
}
